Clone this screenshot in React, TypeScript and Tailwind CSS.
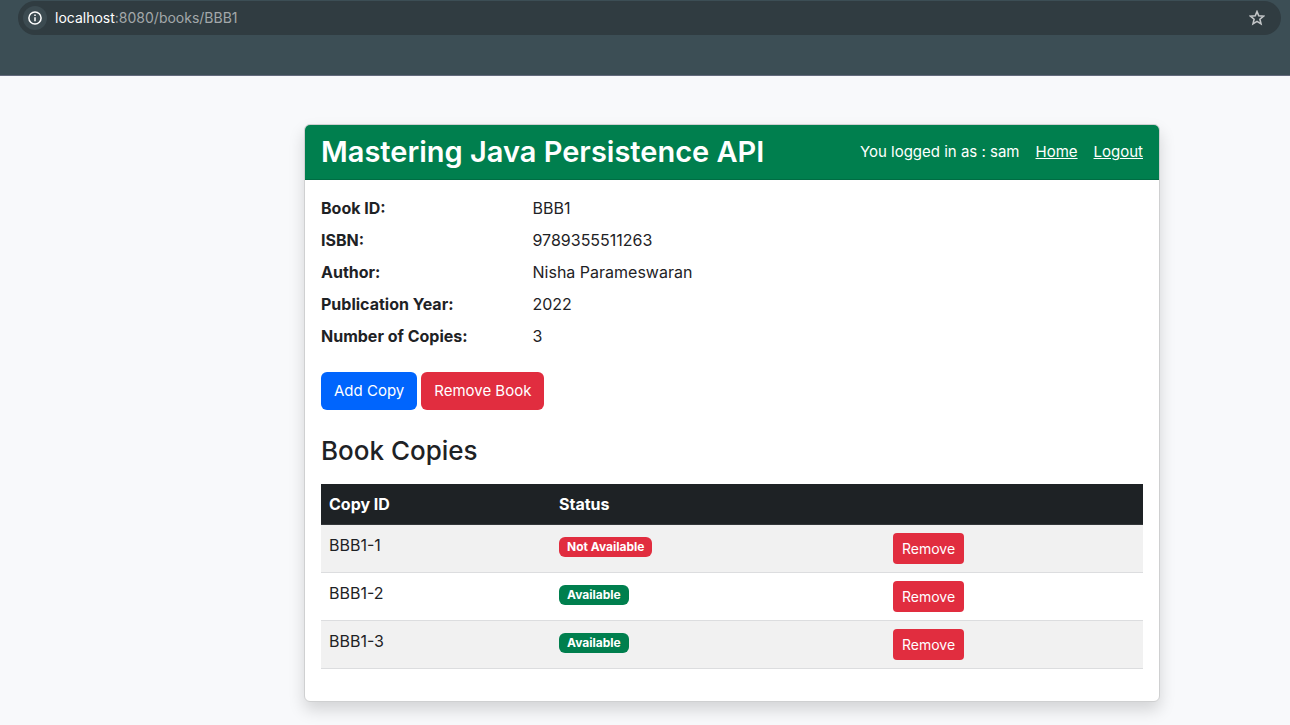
import React from "react";

type Copy = { id: string; available: boolean };

const details: [string, string][] = [
  ["Book ID:", "BBB1"],
  ["ISBN:", "9789355511263"],
  ["Author:", "Nisha Parameswaran"],
  ["Publication Year:", "2022"],
  ["Number of Copies:", "3"],
];

const copies: Copy[] = [
  { id: "BBB1-1", available: false },
  { id: "BBB1-2", available: true },
  { id: "BBB1-3", available: true },
];

function AddressBar() {
  return (
    <div className="h-[76px] border-b border-[#636a7c] bg-[#3c4e55] pt-px pr-[9px] pl-[18px]">
      <div className="flex h-[34px] items-center rounded-full bg-[#303c41] pr-4 pl-[5px]">
        <button
          type="button"
          aria-label="View site information"
          className="flex size-6 items-center justify-center rounded-full bg-[#3c4b51] text-white"
        >
          <svg viewBox="0 0 14 14" className="size-[14px]" fill="none" stroke="currentColor" strokeWidth="1.5">
            <circle cx="7" cy="7" r="6.1" />
            <path d="M7 6.2V10.2M7 3.6V5.1" />
          </svg>
        </button>
        <div className="ml-2 flex-1 text-sm text-[#a3a8aa]">
          <span className="text-white">localhost</span>:8080/books/BBB1
        </div>
        <button type="button" aria-label="Bookmark this tab" className="text-[#c3c6c8]">
          <svg viewBox="0 0 16 16" className="size-4" fill="none" stroke="currentColor" strokeWidth="1.6">
            <path d="M8 1.6L9.75 5.85L14.5 6.2L10.9 9.2L12 13.9L8 11.4L4 13.9L5.1 9.2L1.5 6.2L6.25 5.85Z" />
          </svg>
        </button>
      </div>
    </div>
  );
}

function StatusBadge({ available }: { available: boolean }) {
  return (
    <span
      className={`inline-block rounded-md px-2 py-1 text-xs leading-3 font-bold text-white ${
        available ? "bg-[#007f4e]" : "bg-[#e12d3f]"
      }`}
    >
      {available ? "Available" : "Not Available"}
    </span>
  );
}

export default function App() {
  return (
    <div className="min-h-screen bg-[#f8f9fb] font-['Inter','Liberation_Sans',sans-serif] text-base text-[#1e2225]">
      <AddressBar />
      <main className="pt-12 pr-[130px] pb-6 pl-[304px]">
        <section className="overflow-hidden rounded-md border border-[#cfd0d1] bg-white shadow-[0_8px_16px_rgba(0,0,0,0.15)]">
          <header className="flex items-center justify-between border-b border-[#006c43] bg-[#007f4e] px-4 py-2 text-white">
            <h1 className="text-[29px] leading-[38px] font-semibold">Mastering Java Persistence API</h1>
            <nav className="flex gap-4 text-[15px] leading-6">
              <span>You logged in as : sam</span>
              <a href="#home" className="underline">Home</a>
              <a href="#logout" className="underline">Logout</a>
            </nav>
          </header>
          <div className="p-4">
            <dl>
              {details.map(([label, value]) => (
                <div key={label} className="-mx-3 mb-2 flex">
                  <dt className="w-1/4 px-3 font-bold">{label}</dt>
                  <dd className="flex-1 px-3">{value}</dd>
                </div>
              ))}
            </dl>
            <div className="mt-6 flex gap-1 text-[15px] leading-6 text-white">
              <button type="button" className="rounded-md bg-[#0065fd] px-[13px] py-[7px]">Add Copy</button>
              <button type="button" className="rounded-md bg-[#e12d3f] px-[13px] py-[7px]">Remove Book</button>
            </div>
            <h2 className="mt-6 mb-4 text-[26px] leading-[34px] font-medium">Book Copies</h2>
            <table className="mb-4 w-full table-fixed border-collapse text-left">
              <thead className="bg-[#1e2225] text-white">
                <tr className="border-b border-[#33373a]">
                  <th className="w-[230px] p-2 font-bold">Copy ID</th>
                  <th className="w-[334px] p-2 font-bold">Status</th>
                  <th className="p-2" aria-label="Actions" />
                </tr>
              </thead>
              <tbody>
                {copies.map((copy) => (
                  <tr key={copy.id} className="border-b border-[#dcdddf] odd:bg-[#f1f1f1]">
                    <td className="p-2 align-top">{copy.id}</td>
                    <td className="p-2 align-top"><StatusBadge available={copy.available} /></td>
                    <td className="p-2 align-top">
                      <button type="button" className="block rounded-sm bg-[#e12d3f] px-[9px] py-[5px] text-sm leading-[21px] text-white">
                        Remove
                      </button>
                    </td>
                  </tr>
                ))}
              </tbody>
            </table>
          </div>
        </section>
      </main>
    </div>
  );
}
